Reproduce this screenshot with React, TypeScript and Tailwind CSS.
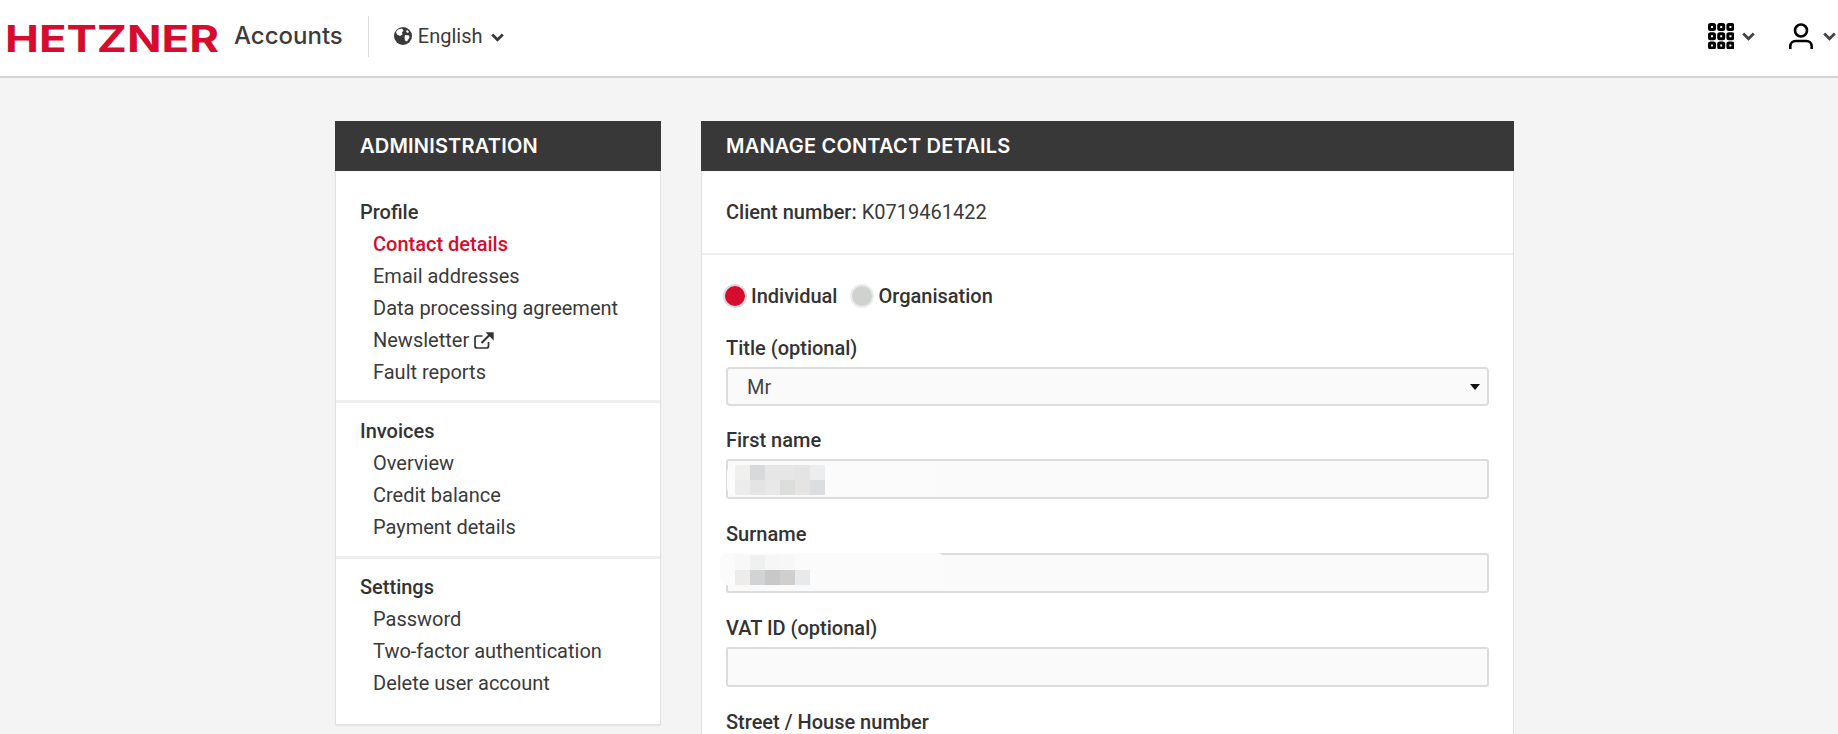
const sections = [
  { title: 'Profile', links: ['Contact details', 'Email addresses', 'Data processing agreement', 'Newsletter', 'Fault reports'], cls: 'pt-[25px] pb-3' },
  { title: 'Invoices', links: ['Overview', 'Credit balance', 'Payment details'], cls: 'pt-3 pb-[13px]' },
  { title: 'Settings', links: ['Password', 'Two-factor authentication', 'Delete user account'], cls: 'pt-3 pb-[25px]' },
]

const firstNameBlur = [
  ['#f0f0ee', '#d8d9da', '#e6e6e6', '#e6e6e6', '#e4e4e4', '#ecedef'],
  ['#ececec', '#e4e4e4', '#e8e8e8', '#dcdedc', '#e6e4e2', '#dcdddf'],
]
const surnameBlur = [
  ['#f8f8f8', '#eff0f0', '#f6f6f6', '#f7f7f7', '#fbfbfb'],
  ['#eeecea', '#d2d3d4', '#c8c8c8', '#d0cfcd', '#e8e9eb'],
]

function Mosaic({ rows, className }: { rows: string[][]; className: string }) {
  return (
    <div className={`absolute flex flex-col ${className}`}>
      {rows.map((row, i) => (
        <div key={i} className="flex">
          {row.map((c, j) => (
            <div key={j} className="w-[15px] h-[15px]" style={{ background: c }} />
          ))}
        </div>
      ))}
    </div>
  )
}

function Field({ label, children, mb = 'mb-[22px]' }: { label: string; children?: React.ReactNode; mb?: string }) {
  return (
    <div className={`relative ${mb}`}>
      <div className="h-[26px] leading-[26px] mb-1.5 font-medium text-[#333]">{label}</div>
      {children ?? <input readOnly className="block w-full h-10 bg-[#fafafa] border-2 border-[#dcdcdc] rounded-[3px]" />}
    </div>
  )
}

function Chevron({ className = '' }: { className?: string }) {
  return (
    <svg width="13" height="9" viewBox="0 0 13 9" fill="none" stroke="currentColor" strokeWidth="2.8" className={className}>
      <path d="M1.2 1.5 6.5 6.8 11.8 1.5" />
    </svg>
  )
}

function Globe() {
  return (
    <svg width="18" height="18" viewBox="0 0 18 18" className="text-[#3a3a3a]">
      <circle cx="9" cy="9" r="9" fill="currentColor" />
      <path d="M4 2.5 8 1.6 9.5 3.5 8 5.5 8.5 7.5 6 9 3 7.5 2 5zM11 8l4 .5.5 2-2.5 4-2-1-.5-3zM13 2.8l2 2-1 1.2-2-1z" fill="#fff" />
    </svg>
  )
}

function ExternalLink() {
  return (
    <svg width="20" height="17" viewBox="0 0 20 17" className="text-[#333]">
      <path d="M14.5 10v4a2 2 0 0 1-2 2H3a2 2 0 0 1-2-2V6a2 2 0 0 1 2-2h5.5" fill="none" stroke="currentColor" strokeWidth="1.7" />
      <path d="M7.5 11 15.5 3" fill="none" stroke="currentColor" strokeWidth="2.2" />
      <path d="M11.5 0.3H19.7V8.5z" fill="currentColor" />
    </svg>
  )
}

function Grid3x3() {
  const cells = [0, 1, 2, 3, 4, 5, 6, 7, 8]
  return (
    <svg width="26" height="26" viewBox="0 0 26 26">
      {cells.map(i => (
        <rect
          key={i}
          x={(i % 3) * 9.2 + 1.5}
          y={Math.floor(i / 3) * 9.2 + 1.5}
          width="5"
          height="5"
          rx="1"
          fill="none"
          stroke="#000"
          strokeWidth="3"
        />
      ))}
    </svg>
  )
}

function UserIcon() {
  return (
    <svg width="24" height="26" viewBox="0 0 24 26" fill="none" stroke="#000" strokeWidth="2.6">
      <circle cx="12" cy="7.5" r="6" />
      <path d="M1.3 26v-2.5c0-3.5 2.5-5.5 5.5-5.5h10.4c3 0 5.5 2 5.5 5.5V26" />
    </svg>
  )
}

const headingCls = "h-[50px] leading-[50px] bg-[#383838] text-white px-[25px] font-['Inter',sans-serif] font-semibold text-[20px] tracking-[0.2px] uppercase"
const inputCls = 'block w-full h-10 bg-[#fafafa] border-2 border-[#dcdcdc] rounded-[3px]'

export default function App() {
  return (
    <div className="h-[734px] overflow-hidden bg-[#f4f4f4] text-[#3a3a3a] font-['Roboto',sans-serif] text-[20px]">
      <header className="h-[78px] bg-white border-b-2 border-[#d4d4d4] flex items-center pl-[5px] pr-[2px]">
        <svg width="214" height="44" className="shrink-0 mt-[1px]">
          <text
            x="0"
            y="35"
            textLength="214"
            lengthAdjust="spacingAndGlyphs"
            fill="#d50c2d"
            fontFamily="Inter, sans-serif"
            fontWeight="700"
            fontSize="37"
          >
            HETZNER
          </text>
        </svg>
        <div className="flex-1 flex items-center pb-1">
          <span className="ml-[15px] font-['Inter',sans-serif] text-[24px] font-medium text-[#3c3c3c]">Accounts</span>
          <div className="ml-[25px] w-px h-[41px] bg-[#dcdcdc]" />
          <div className="ml-[25px]">
            <Globe />
          </div>
          <span className="ml-[6px]">English</span>
          <Chevron className="ml-2 mt-[3px]" />
          <div className="ml-auto flex items-center">
            <Grid3x3 />
            <Chevron className="ml-2 text-[#444]" />
            <div className="ml-[34px]">
              <UserIcon />
            </div>
            <Chevron className="ml-[10px] text-[#444]" />
          </div>
        </div>
      </header>

      <main className="flex items-start gap-10 pl-[335px] pt-[43px]">
        <aside className="w-[326px] shrink-0">
          <h2 className={headingCls}>Administration</h2>
          <div className="bg-white border-x border-b border-[#e2e2e2] shadow-[0_1px_1px_rgba(0,0,0,0.06)]">
            {sections.map((s, i) => (
              <div key={s.title} className={`${s.cls} ${i > 0 ? 'border-t-[3px] border-[#eeeeee]' : ''}`}>
                <div className="pl-6 h-8 leading-8 font-medium text-[#333]">{s.title}</div>
                <ul>
                  {s.links.map(l => (
                    <li key={l} className={`pl-[37px] h-8 leading-8 flex items-center gap-[5px] ${l === 'Contact details' ? 'text-[#d50c2d] font-medium' : ''}`}>
                      {l}
                      {l === 'Newsletter' && <ExternalLink />}
                    </li>
                  ))}
                </ul>
              </div>
            ))}
          </div>
        </aside>

        <section className="w-[813px] shrink-0">
          <h2 className={headingCls}>Manage contact details</h2>
          <div className="bg-white border-x border-[#e2e2e2]">
            <div className="h-[84px] flex items-center px-6 border-b-2 border-[#eeeeee]">
              <span className="font-medium mr-[5px] text-[#333]">Client number:</span> K0719461422
            </div>
            <form className="px-6 pt-[29px]">
              <div className="flex items-center h-6 mb-[27px] -ml-[3px] font-medium text-[#333]">
                <span className="w-6 h-6 rounded-full bg-[#d50c2d] border-2 border-[#dcdcdc]" />
                <span className="ml-[4px]">Individual</span>
                <span className="ml-[13px] w-6 h-6 rounded-full bg-[#d0d2d0] border-2 border-[#ebebeb]" />
                <span className="ml-[4px]">Organisation</span>
              </div>

              <Field label="Title (optional)" mb="mb-[21px]">
                <div className="relative">
                  <select className="block w-full h-[39px] appearance-none bg-[#fafafa] border-2 border-[#dcdcdc] rounded-[4px] pl-[19px] text-[#444]">
                    <option>Mr</option>
                  </select>
                  <svg width="10" height="6" viewBox="0 0 10 6" className="absolute right-[9px] top-[17px]">
                    <path d="M0 0h10L5 6z" fill="#111" />
                  </svg>
                </div>
              </Field>

              <Field label="First name">
                <input readOnly className={inputCls} />
                <div className="absolute left-px top-[38px] w-[210px] h-[30px] bg-[#fbfbfb] rounded-l-lg" />
                <Mosaic rows={firstNameBlur} className="left-[9px] top-[38px]" />
              </Field>

              <Field label="Surname">
                <input readOnly className={inputCls} />
                <div className="absolute -left-[6px] top-[32px] w-[225px] h-[32px] bg-[#fbfbfb] rounded-lg" />
                <Mosaic rows={surnameBlur} className="left-[9px] top-[34px]" />
              </Field>

              <Field label="VAT ID (optional)" />
              <Field label="Street / House number" />
            </form>
          </div>
        </section>
      </main>
    </div>
  )
}
